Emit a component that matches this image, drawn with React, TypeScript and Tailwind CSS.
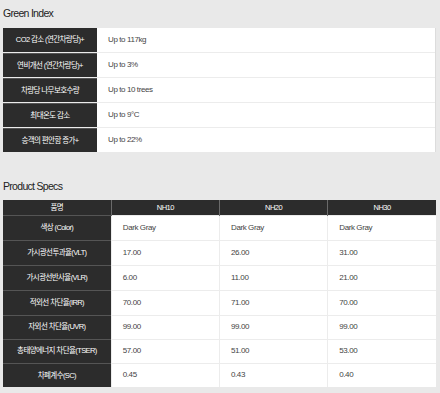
import React from 'react';

const greenIndex = [
  ['CO2 감소 (연간차량당)+', 'Up to 117kg'],
  ['연비개선 (연간차량당)+', 'Up to 3%'],
  ['차량당 나무보호수량', 'Up to 10 trees'],
  ['최대온도 감소', 'Up to 9°C'],
  ['승객의 편안함 증가+', 'Up to 22%'],
];

const specs = [
  ['색상 (Color)', 'Dark Gray', 'Dark Gray', 'Dark Gray'],
  ['가시광선투과율(VLT)', '17.00', '26.00', '31.00'],
  ['가시광선반사율(VLR)', '6.00', '11.00', '21.00'],
  ['적외선 차단율(IRR)', '70.00', '71.00', '70.00'],
  ['자외선 차단율(UVR)', '99.00', '99.00', '99.00'],
  ['총태양에너지 차단율(TSER)', '57.00', '51.00', '53.00'],
  ['차폐계수(SC)', '0.45', '0.43', '0.40'],
];

const font = { fontFamily: '"Liberation Sans", "Noto Sans CJK KR", sans-serif' };

export default function App() {
  return (
    <div className="w-[440px] h-[393px] bg-[#e9e9e9] pl-[3px] pr-[4px] overflow-hidden" style={font}>
      <div className="h-[28px] pt-[7px] text-[10.5px] leading-[12px] tracking-[-0.7px] text-[#222]">Green Index</div>
      <div className="bg-white border-r border-[#dcdcdc]">
        {greenIndex.map(([label, value], i) => (
          <div key={label} className={`flex ${i > 0 ? 'h-[25px] border-t border-[#ececec]' : 'h-[24px]'}`}>
            <div
              className={`w-[94px] shrink-0 bg-[#2c2c2c] text-white flex items-center justify-center text-[7.5px] tracking-[-0.6px] ${
                i > 0 ? 'border-t border-[#555]' : ''
              }`}
            >
              {label}
            </div>
            <div className="flex-1 flex items-center pl-[11px] text-[8px] tracking-[-0.4px] text-[#444]">{value}</div>
          </div>
        ))}
      </div>

      <div className="h-[48px] flex items-end pb-[8px] text-[10.5px] leading-[12px] tracking-[-0.7px] text-[#222]">
        Product Specs
      </div>
      <table className="w-full table-fixed border-collapse bg-white">
        <thead>
          <tr className="h-[15px] bg-[#2c2c2c] text-white text-[7.5px] tracking-[-0.5px]">
            {['품명', 'NH10', 'NH20', 'NH30'].map((h, i) => (
              <th key={h} className={`font-normal p-0 ${i > 0 ? 'border-l border-[#6a6a6a]' : ''}`}>
                {h}
              </th>
            ))}
          </tr>
        </thead>
        <tbody>
          {specs.map((row, r) => (
            <tr key={row[0]} className={r < 4 ? 'h-[25px]' : 'h-[24px]'}>
              {row.map((cell, i) =>
                i === 0 ? (
                  <td
                    key={i}
                    className="p-0 bg-[#2c2c2c] text-white text-center text-[7.5px] tracking-[-0.6px] border-t border-[#555]"
                  >
                    {cell}
                  </td>
                ) : (
                  <td
                    key={i}
                    className="p-0 pl-[11px] text-[8px] tracking-[-0.4px] text-[#444] border-t border-l border-[#ececec]"
                  >
                    {cell}
                  </td>
                )
              )}
            </tr>
          ))}
        </tbody>
      </table>
    </div>
  );
}
